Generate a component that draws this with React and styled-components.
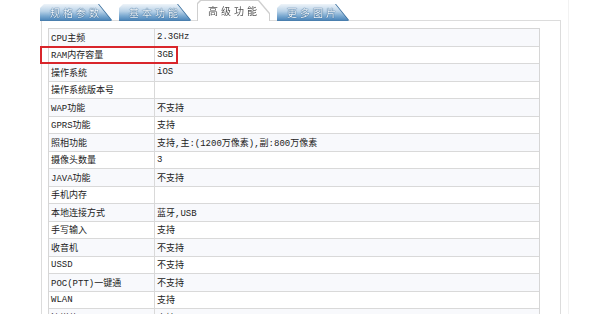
import React from 'react';
import styled, { createGlobalStyle } from 'styled-components';

const tabs = [
  { id: 1, title: '规格参数' },
  { id: 2, title: '基本功能' },
  { id: 3, title: '高级功能', active: true },
  { id: 4, title: '更多图片' },
];

const specs = [
  ['CPU主频', '2.3GHz'],
  ['RAM内存容量', '3GB', true],
  ['操作系统', 'iOS'],
  ['操作系统版本号', ''],
  ['WAP功能', '不支持'],
  ['GPRS功能', '支持'],
  ['照相功能', '支持,主:(1200万像素),副:800万像素'],
  ['摄像头数量', '3'],
  ['JAVA功能', '不支持'],
  ['手机内存', ''],
  ['本地连接方式', '蓝牙,USB'],
  ['手写输入', '支持'],
  ['收音机', '不支持'],
  ['USSD', '不支持'],
  ['POC(PTT)一键通', '不支持'],
  ['WLAN', '支持'],
  ['流媒体', '支持'],
];

export default function App() {
  return (
    <>
      <GlobalStyle />
      <Page>
        <TabBar>
          {tabs.map((tab) =>
            tab.active ? (
              <ActiveTabFrame key={tab.id}>
                <ActiveTab>{tab.title}</ActiveTab>
              </ActiveTabFrame>
            ) : (
              <TabFrame key={tab.id}>
                <Tab>{tab.title}</Tab>
              </TabFrame>
            )
          )}
        </TabBar>
        <Panel>
          <Table>
            {specs.map(([label, value, marked], i) => (
              <Row key={label} $odd={i % 2 === 0} $marked={marked}>
                <Label>{label}</Label>
                <Value>{value}</Value>
              </Row>
            ))}
          </Table>
        </Panel>
      </Page>
    </>
  );
}

const GlobalStyle = createGlobalStyle`
  html, body {
    margin: 0;
    padding: 0;
    background: #fff;
    overflow: hidden;
  }
  body {
    font-family: "Liberation Mono", "Noto Sans CJK SC", monospace;
    font-size: 9px;
    color: #222;
  }
`;

const Page = styled.div`
  width: 568px;
  height: 314px;
  border-right: 1px solid #f2f2f2;
`;

const TabBar = styled.div`
  display: flex;
  align-items: flex-end;
  gap: 8px;
  height: 20px;
  padding-left: 40px;
  position: relative;
  z-index: 2;
`;

const TabFrame = styled.div`
  filter: drop-shadow(1px 0 0 #3a6f9e) drop-shadow(0 1px 0 #4a7fae);
`;

const Tab = styled.div`
  width: 71px;
  height: 16px;
  padding-left: 10px;
  box-sizing: border-box;
  display: flex;
  align-items: center;
  background: linear-gradient(#eef4f9, #b9d2e7 45%, #79a8d0 75%, #4f88bb);
  clip-path: polygon(0 4px, 4px 0, 58px 0, 71px 16px, 0 16px);
  font-family: "Noto Sans CJK SC", sans-serif;
  font-size: 10px;
  letter-spacing: 3px;
  color: #f4f8fb;
  text-shadow: 0 0 1px #1f5585, 0 0 1px #1f5585;
`;

const ActiveTabFrame = styled.div`
  margin-bottom: -1px;
  filter: drop-shadow(1px 0 0 #cfcfcf) drop-shadow(-1px 0 0 #cfcfcf)
    drop-shadow(0 -1px 0 #cfcfcf);
`;

const ActiveTab = styled.div`
  width: 71px;
  height: 20px;
  padding: 0 0 2px 10px;
  box-sizing: border-box;
  display: flex;
  align-items: center;
  background: #fff;
  clip-path: polygon(0 3px, 3px 0, 60px 0, 71px 13px, 71px 21px, 0 21px);
  font-family: "Noto Sans CJK SC", sans-serif;
  font-size: 10px;
  letter-spacing: 3px;
  color: #555;
`;

const Panel = styled.div`
  margin-left: 41px;
  width: 520px;
  height: 300px;
  box-sizing: border-box;
  border: 1px solid #dcdcdc;
  padding: 7px 20px 0 6px;
`;

const Table = styled.div`
  border: 1px solid #d6d6d6;
  border-bottom: none;
`;

const Row = styled.div`
  position: relative;
  display: grid;
  grid-template-columns: 106px 1fr;
  height: 17.5px;
  box-sizing: border-box;
  border-bottom: 1px solid #d9d9d9;
  background: ${(p) => (p.$odd ? '#f8f9fc' : '#fff')};

  ${(p) =>
    p.$marked &&
    `
    &::after {
      content: '';
      position: absolute;
      left: -9px;
      top: -1px;
      width: 138px;
      height: 18px;
      box-sizing: border-box;
      border: 2px solid #d9262b;
    }
  `}
`;

const Label = styled.div`
  display: flex;
  align-items: center;
  padding-left: 2px;
  border-right: 1px solid #d9d9d9;
  white-space: nowrap;
`;

const Value = styled.div`
  display: flex;
  align-items: center;
  padding-left: 2px;
  white-space: nowrap;
`;
